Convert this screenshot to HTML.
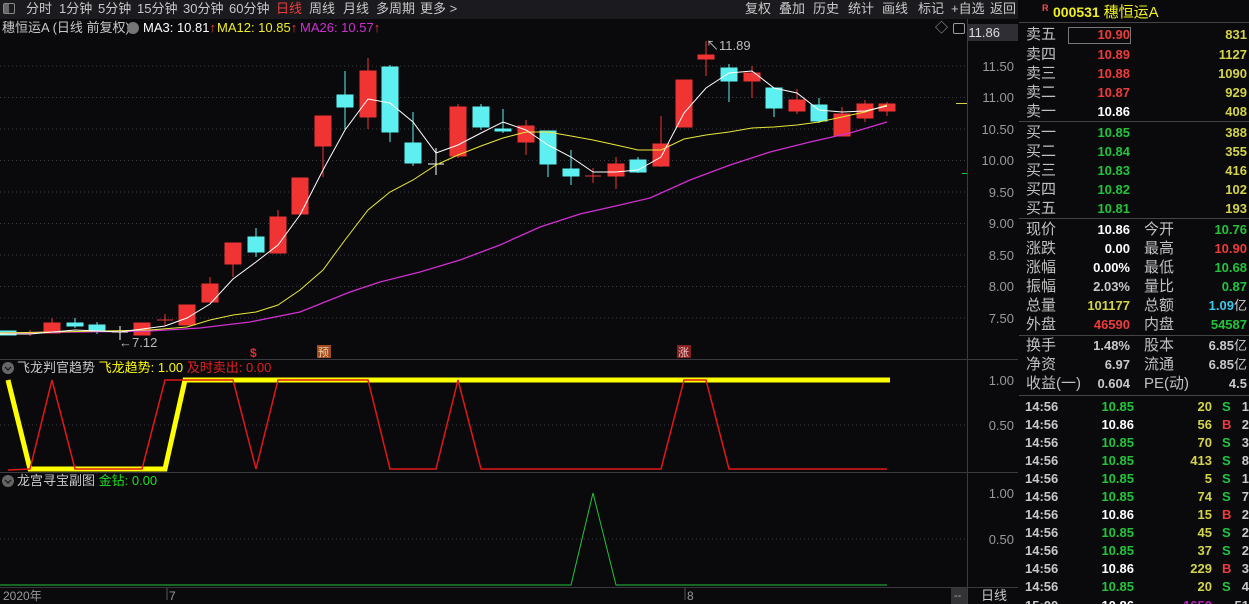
<!DOCTYPE html>
<html style="width:1249px;height:604px;overflow:hidden"><head><meta charset="utf-8"><style>
*{margin:0;padding:0;box-sizing:border-box}
body{width:1249px;height:604px;background:#0a0a0d;overflow:hidden;position:relative;font-family:"Liberation Sans","Noto Sans CJK SC",sans-serif;font-size:13px;color:#ccc}
.a{position:absolute;white-space:nowrap;line-height:16px}
.r{text-align:right}
.b{font-weight:bold}
.lb{font-size:15px;color:#c0c0c0}
.y{color:#d4d44a}.g{color:#22c43c}.rd{color:#ee3b3b}.w{color:#fff}.gy{color:#c8c8c8}
</style></head><body>
<div class="a" style="left:0;top:0;width:1018px;height:19px;background:#1b1b1f"></div>
<div class="a" style="left:3px;top:3px;width:12px;height:11px;border:1px solid #888;border-radius:2px"></div>
<div class="a" style="left:4px;top:4px;width:5px;height:9px;background:#666"></div>
<div class="a gy" style="top:1px;left:26px">分时</div>
<div class="a gy" style="top:1px;left:59px">1分钟</div>
<div class="a gy" style="top:1px;left:98px">5分钟</div>
<div class="a gy" style="top:1px;left:137px">15分钟</div>
<div class="a gy" style="top:1px;left:183px">30分钟</div>
<div class="a gy" style="top:1px;left:229px">60分钟</div>
<div class="a rd" style="top:1px;left:276px">日线</div>
<div class="a gy" style="top:1px;left:309px">周线</div>
<div class="a gy" style="top:1px;left:343px">月线</div>
<div class="a gy" style="top:1px;left:376px">多周期</div>
<div class="a gy" style="top:1px;left:420px">更多 &gt;</div>
<div class="a gy" style="top:1px;left:745px">复权</div>
<div class="a gy" style="top:1px;left:779px">叠加</div>
<div class="a gy" style="top:1px;left:813px">历史</div>
<div class="a gy" style="top:1px;left:848px">统计</div>
<div class="a gy" style="top:1px;left:882px">画线</div>
<div class="a gy" style="top:1px;left:918px">标记</div>
<div class="a gy" style="top:1px;left:951px">+自选</div>
<div class="a gy" style="top:1px;left:990px">返回</div>

<div class="a gy" style="top:20px;left:2px">穗恒运A (日线 前复权)</div>
<div class="a" style="top:22px;left:127px;width:12px;height:12px;border-radius:50%;background:#777"></div>
<div class="a w" style="top:20px;left:143px">MA3: 10.81<span class="rd">↑</span></div>
<div class="a" style="top:20px;left:217px;color:#f0f020">MA12: 10.85<span class="rd">↑</span></div>
<div class="a" style="top:20px;left:300px;color:#d030d0">MA26: 10.57<span class="rd">↑</span></div>
<div class="a" style="top:20px;left:935px;color:#aaa">◇</div>
<div class="a" style="top:23px;left:953px;width:12px;height:11px;border:1px solid #999;border-radius:2px"></div>

<svg class="a" style="left:0;top:0" width="1018" height="604">
<g stroke="#3a3a40" stroke-width="1">
<line x1="967.5" y1="19" x2="967.5" y2="604"/><line x1="1018.5" y1="0" x2="1018.5" y2="604"/>
<line x1="0" y1="359.5" x2="1018" y2="359.5"/><line x1="0" y1="472.5" x2="1018" y2="472.5"/><line x1="0" y1="587.5" x2="1018" y2="587.5"/>
</g>
<g stroke="#3c3c44" stroke-dasharray="1 3">
<line x1="0" y1="66" x2="967" y2="66"/><line x1="0" y1="97.5" x2="967" y2="97.5"/><line x1="0" y1="129" x2="967" y2="129"/><line x1="0" y1="160.5" x2="967" y2="160.5"/><line x1="0" y1="192" x2="967" y2="192"/><line x1="0" y1="223.5" x2="967" y2="223.5"/><line x1="0" y1="255" x2="967" y2="255"/><line x1="0" y1="286.5" x2="967" y2="286.5"/><line x1="0" y1="318" x2="967" y2="318"/>
<line x1="0" y1="425" x2="967" y2="425"/><line x1="0" y1="539" x2="967" y2="539"/>
</g>
<rect x="968" y="24" width="50" height="17" fill="#2e2e34"/>
<g fill="#999" font-size="13" text-anchor="end">
<text x="1000" y="37" fill="#ddd">11.86</text>
<text x="1014" y="71">11.50</text><text x="1014" y="102">11.00</text><text x="1014" y="134">10.50</text><text x="1014" y="165">10.00</text><text x="1014" y="197">9.50</text><text x="1014" y="228">9.00</text><text x="1014" y="260">8.50</text><text x="1014" y="291">8.00</text><text x="1014" y="323">7.50</text>
<text x="1014" y="385">1.00</text><text x="1014" y="430">0.50</text>
<text x="1014" y="498">1.00</text><text x="1014" y="544">0.50</text>
</g>
<line x1="956" y1="103.5" x2="967" y2="103.5" stroke="#d4d44a"/>
<line x1="962" y1="173.5" x2="967" y2="173.5" stroke="#22c43c"/>
<g stroke-width="1">
<g fill="#f03434" stroke="#f03434">
<line x1="52" y1="318" x2="52" y2="333"/><rect x="44" y="323" width="16" height="10"/>
<line x1="30" y1="330" x2="30" y2="336"/><line x1="22" y1="333" x2="38" y2="333"/>
<rect x="134" y="323" width="16" height="12"/>
<line x1="165" y1="314" x2="165" y2="326"/><line x1="157" y1="320" x2="173" y2="320"/>
<rect x="179" y="305" width="16" height="20"/>
<line x1="210" y1="277" x2="210" y2="284"/><rect x="202" y="284" width="16" height="18"/>
<line x1="233" y1="262" x2="233" y2="277"/><rect x="225" y="243" width="16" height="21"/>
<line x1="278" y1="210" x2="278" y2="217"/><rect x="270" y="217" width="16" height="36"/>
<rect x="292" y="178" width="16" height="36"/>
<line x1="323" y1="146" x2="323" y2="177"/><rect x="315" y="116" width="16" height="30"/>
<line x1="368" y1="58" x2="368" y2="129"/><rect x="360" y="71" width="16" height="46"/>
<line x1="458" y1="104" x2="458" y2="158"/><rect x="450" y="107" width="16" height="49"/>
<line x1="526" y1="120" x2="526" y2="155"/><rect x="518" y="126" width="16" height="16"/>
<line x1="593" y1="168" x2="593" y2="183"/><line x1="585" y1="176" x2="601" y2="176"/>
<line x1="616" y1="157" x2="616" y2="189"/><rect x="608" y="164" width="16" height="12"/>
<line x1="661" y1="116" x2="661" y2="167"/><rect x="653" y="144" width="16" height="22"/>
<rect x="676" y="80" width="16" height="47"/>
<line x1="706" y1="41" x2="706" y2="76"/><rect x="698" y="55" width="16" height="4"/>
<line x1="752" y1="66" x2="752" y2="98"/><rect x="744" y="73" width="16" height="8"/>
<line x1="797" y1="89" x2="797" y2="114"/><rect x="789" y="100" width="16" height="11"/>
<line x1="842" y1="107" x2="842" y2="114"/><rect x="834" y="114" width="16" height="22"/>
<line x1="865" y1="100" x2="865" y2="122"/><rect x="857" y="104" width="16" height="14"/>
<line x1="887" y1="102" x2="887" y2="116"/><rect x="879" y="104" width="16" height="7"/>
</g>
<g fill="#5ef0f0" stroke="#5ef0f0">
<rect x="0" y="331" width="16" height="4"/>
<line x1="75" y1="318" x2="75" y2="328"/><rect x="67" y="323" width="16" height="3"/>
<line x1="97" y1="322" x2="97" y2="334"/><rect x="89" y="325" width="16" height="6"/>
<line x1="256" y1="228" x2="256" y2="257"/><rect x="248" y="237" width="16" height="15"/>
<line x1="345" y1="71" x2="345" y2="129"/><rect x="337" y="95" width="16" height="12"/>
<line x1="390" y1="65" x2="390" y2="142"/><rect x="382" y="67" width="16" height="65"/>
<line x1="413" y1="112" x2="413" y2="166"/><rect x="405" y="143" width="16" height="20"/>
<line x1="481" y1="104" x2="481" y2="130"/><rect x="473" y="107" width="16" height="20"/>
<line x1="503" y1="109" x2="503" y2="133"/><rect x="495" y="129" width="16" height="2"/>
<line x1="548" y1="131" x2="548" y2="177"/><rect x="540" y="131" width="16" height="33"/>
<line x1="571" y1="150" x2="571" y2="185"/><rect x="563" y="169" width="16" height="7"/>
<line x1="638" y1="157" x2="638" y2="173"/><rect x="630" y="160" width="16" height="12"/>
<line x1="729" y1="64" x2="729" y2="102"/><rect x="721" y="68" width="16" height="13"/>
<line x1="774" y1="88" x2="774" y2="117"/><rect x="766" y="88" width="16" height="20"/>
<line x1="819" y1="98" x2="819" y2="123"/><rect x="811" y="105" width="16" height="16"/>
</g>
<g stroke="#fff"><line x1="120" y1="326" x2="120" y2="340"/><line x1="112" y1="332" x2="128" y2="332"/>
<line x1="436" y1="148" x2="436" y2="175"/><line x1="428" y1="164" x2="444" y2="164"/></g>
</g>
<polyline fill="none" stroke="#d030d0" stroke-width="1.3" points="0,333 150,331 200,328 250,322 300,312 350,292 380,282 420,272 460,260 500,245 540,227 580,214 620,205 650,198 690,180 730,165 770,152 810,142 850,133 887,122"/>
<polyline fill="none" stroke="#e8e83a" stroke-width="1" points="0,333 150,330 187,327 210,320 233,315 256,312 278,305 300,290 323,270 345,240 368,210 390,192 413,180 436,165 458,155 481,146 503,138 526,132 548,132 571,136 593,140 616,145 638,150 661,150 684,139 706,135 729,132 752,128 774,127 797,125 819,122 842,117 865,112 887,105"/>
<polyline fill="none" stroke="#fff" stroke-width="1" points="0,334 30,334 75,330 120,332 150,328 165,326 187,318 210,304 233,279 256,262 278,245 300,215 323,170 345,130 368,99 390,103 413,122 436,153 458,145 481,133 503,122 526,130 548,145 571,157 593,172 616,172 638,170 661,157 684,113 706,88 729,73 752,71 774,88 797,93 819,110 842,112 865,111 887,106"/>
<text x="119" y="347" fill="#bbb" font-size="13">←7.12</text>
<text x="706" y="50" fill="#bbb" font-size="13">↖11.89</text>
<text x="250" y="357" fill="#e03030" font-size="12" font-weight="bold">$</text>
<rect x="317" y="345" width="14" height="13" fill="#a04a20"/><text x="318" y="356" fill="#f0d0a0" font-size="11">预</text>
<rect x="677" y="345" width="14" height="13" fill="#802020"/><text x="678" y="356" fill="#f0c0c0" font-size="11">涨</text>
<polyline fill="none" stroke="#ffff00" stroke-width="5" points="8,380 30,469 165,469 185,380 890,380"/>
<polyline fill="none" stroke="#e01818" stroke-width="1.5" points="8,470 30,469 52,380 75,469 142,469 165,380 233,380 256,469 278,380 368,380 390,469 436,469 458,380 481,469 661,469 684,380 706,380 729,469 887,469"/>
<polyline fill="none" stroke="#22c43c" stroke-width="1" points="0,585 571,585 593,493 616,585 887,585"/>
<circle cx="8" cy="368" r="6" fill="#666"/><circle cx="8" cy="481" r="6" fill="#666"/>
<path d="M5 367 L8 370 L11 367 M5 480 L8 483 L11 480" stroke="#222" fill="none" stroke-width="1.5"/>
<g stroke="#555"><line x1="167" y1="588" x2="167" y2="600"/><line x1="685" y1="588" x2="685" y2="600"/></g>
<rect x="951" y="588" width="16" height="16" fill="#333"/>
</svg>
<div class="a gy" style="top:360px;left:17px">飞龙判官趋势 <span style="color:#ffff00">飞龙趋势: 1.00</span> <span style="color:#e02020">及时卖出: 0.00</span></div>
<div class="a gy" style="top:473px;left:17px">龙宫寻宝副图 <span style="color:#22dd22">金钻: 0.00</span></div>
<div class="a" style="top:588px;left:3px;color:#999;font-size:12px">2020年</div>
<div class="a" style="top:588px;left:169px;color:#999;font-size:12px">7</div>
<div class="a" style="top:588px;left:687px;color:#999;font-size:12px">8</div>
<div class="a" style="top:588px;left:954px;color:#aaa;font-size:11px">--</div>
<div class="a gy" style="top:588px;left:981px">日线</div>

<div class="a" style="left:1019px;top:0;width:230px;height:604px;background:#0a0a0d;overflow:hidden">
<div id="rp" style="position:absolute;left:-1019px;top:0;width:1249px;height:604px"></div>
</div>
<div class="a" style="left:1042px;top:0px;color:#f05050;font-size:9px;font-weight:bold">R</div>
<div class="a b" style="left:1053px;top:4px;color:#f0f020;font-size:14px">000531 <span style="font-weight:normal;font-size:15px">穗恒运A</span></div>
<div class="a" style="left:1019px;top:22px;width:230px;border-top:1px solid #444"></div>
<div class="a" style="left:1019px;top:121px;width:230px;border-top:1px solid #444"></div>
<div class="a" style="left:1019px;top:218px;width:230px;border-top:1px solid #444"></div>
<div class="a" style="left:1019px;top:335px;width:230px;border-top:1px solid #444"></div>
<div class="a" style="left:1019px;top:395px;width:230px;border-top:1px solid #444"></div>
<div class="a" style="left:1068px;top:27px;width:63px;height:17px;border:1px solid #777"></div>
<script>
var h='';
function t(x,y,s,c,al,bold,w){h+='<div class="a '+(c||'')+(bold?' b':'')+(al?' r':'')+'" style="top:'+(y-8)+'px;'+(al?'left:'+(x-w)+'px;width:'+w+'px':'left:'+x+'px')+'">'+s+'</div>';}
var L=[['卖五','10.90','rd','831',35],['卖四','10.89','rd','1127',55],['卖三','10.88','rd','1090',74],['卖二','10.87','rd','929',93],['卖一','10.86','w','408',112],['买一','10.85','g','388',133],['买二','10.84','g','355',152],['买三','10.83','g','416',171],['买四','10.82','g','102',190],['买五','10.81','g','193',209]];
L.forEach(function(r){t(1026,r[4],r[0],'lb');t(1130,r[4],r[1],r[2],1,1,60);t(1247,r[4],r[3],'y',1,1,60);});
var M=[['现价','10.86','w','今开','10.76','g',230],['涨跌','0.00','w','最高','10.90','rd',249],['涨幅','0.00%','w','最低','10.68','g',268],['振幅','2.03%','gy','量比','0.87','g',287],['总量','101177','y','总额','1.09<span style="font-weight:normal">亿</span>','',306],['外盘','46590','rd','内盘','54587','g',325],['换手','1.48%','gy','股本','6.85<span style="font-weight:normal">亿</span>','gy',346],['净资','6.97','gy','流通','6.85<span style="font-weight:normal">亿</span>','gy',365],['收益(一)','0.604','gy','PE(动)','4.5','gy',384]];
M.forEach(function(r){t(1026,r[6],r[0],'lb');t(1130,r[6],r[1],r[2],1,1,70);t(1144,r[6],r[3],'lb');t(1247,r[6],r[4],r[5],1,1,70);});
h=h.replace('1.09<','<span style="color:#3cc8e8">1.09</span><');
var T=[['10.85','g','20','S',1],['10.86','w','56','B',2],['10.85','g','70','S',3],['10.85','g','413','S',8],['10.85','g','5','S',1],['10.85','g','74','S',7],['10.86','w','15','B',2],['10.85','g','45','S',2],['10.85','g','37','S',2],['10.86','w','229','B',3],['10.85','g','20','S',4]];
T.forEach(function(r,i){var y=407+i*18;t(1025,y,'14:56','gy',0,1);t(1134,y,r[0],r[1],1,1,60);t(1212,y,r[2],'y',1,1,50);t(1222,y,r[3],r[3]=='S'?'g':'rd',0,1);t(1249,y,r[4],'gy',1,1,20);});
var yl=606;t(1025,yl,'15:00','gy',0,1);t(1134,yl,'10.86','w',1,1,60);h+='<div class="a b r" style="top:'+(yl-8)+'px;left:1152px;width:60px;color:#c020c0">1650</div>';t(1249,yl,'51','gy',1,1,20);
document.getElementById('rp').innerHTML=h;
</script>
</body></html>
